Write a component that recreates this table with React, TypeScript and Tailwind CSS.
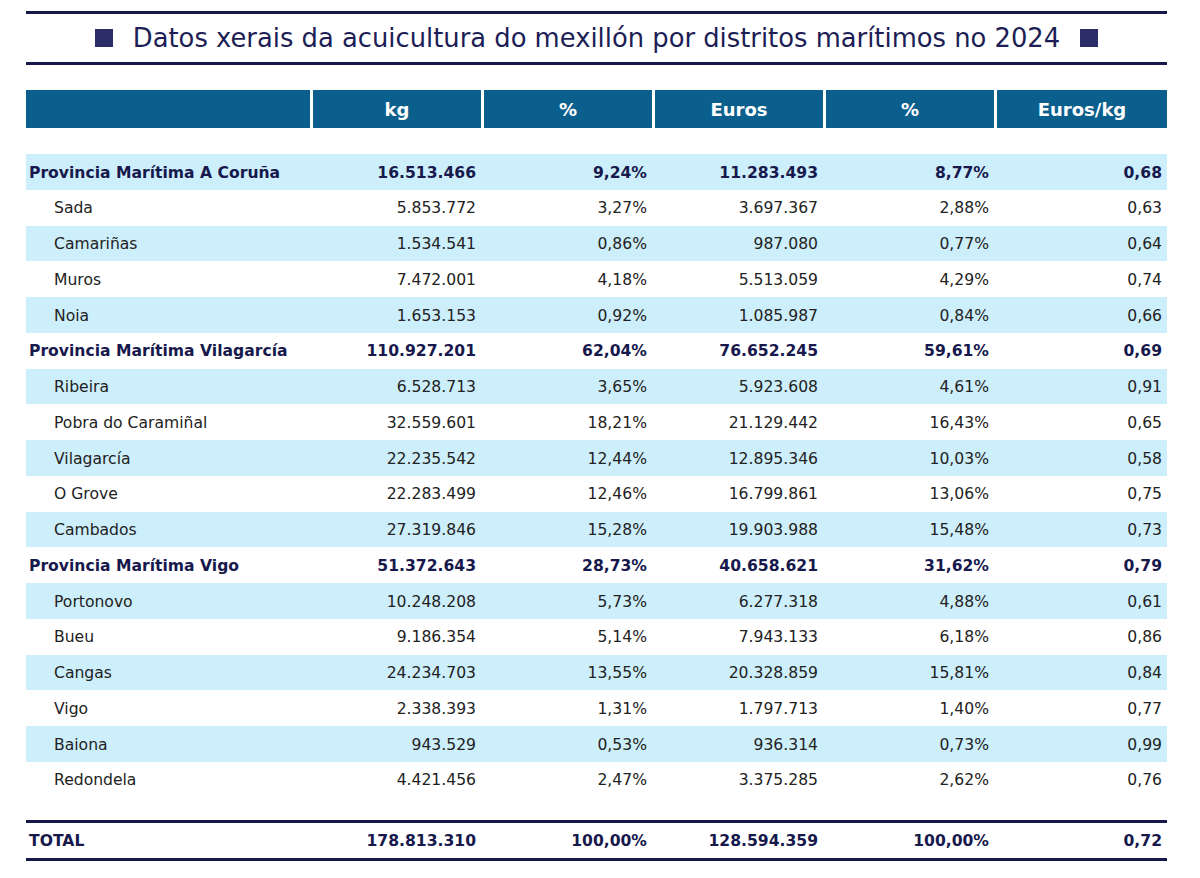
import React from "react";

type Row = {
  name: string;
  kg: string;
  kgPct: string;
  eur: string;
  eurPct: string;
  eurKg: string;
  head?: boolean;
};

const ROWS: Row[] = [
  { name: "Provincia Marítima A Coruña", kg: "16.513.466", kgPct: "9,24%", eur: "11.283.493", eurPct: "8,77%", eurKg: "0,68", head: true },
  { name: "Sada", kg: "5.853.772", kgPct: "3,27%", eur: "3.697.367", eurPct: "2,88%", eurKg: "0,63" },
  { name: "Camariñas", kg: "1.534.541", kgPct: "0,86%", eur: "987.080", eurPct: "0,77%", eurKg: "0,64" },
  { name: "Muros", kg: "7.472.001", kgPct: "4,18%", eur: "5.513.059", eurPct: "4,29%", eurKg: "0,74" },
  { name: "Noia", kg: "1.653.153", kgPct: "0,92%", eur: "1.085.987", eurPct: "0,84%", eurKg: "0,66" },
  { name: "Provincia Marítima Vilagarcía", kg: "110.927.201", kgPct: "62,04%", eur: "76.652.245", eurPct: "59,61%", eurKg: "0,69", head: true },
  { name: "Ribeira", kg: "6.528.713", kgPct: "3,65%", eur: "5.923.608", eurPct: "4,61%", eurKg: "0,91" },
  { name: "Pobra do Caramiñal", kg: "32.559.601", kgPct: "18,21%", eur: "21.129.442", eurPct: "16,43%", eurKg: "0,65" },
  { name: "Vilagarcía", kg: "22.235.542", kgPct: "12,44%", eur: "12.895.346", eurPct: "10,03%", eurKg: "0,58" },
  { name: "O Grove", kg: "22.283.499", kgPct: "12,46%", eur: "16.799.861", eurPct: "13,06%", eurKg: "0,75" },
  { name: "Cambados", kg: "27.319.846", kgPct: "15,28%", eur: "19.903.988", eurPct: "15,48%", eurKg: "0,73" },
  { name: "Provincia Marítima Vigo", kg: "51.372.643", kgPct: "28,73%", eur: "40.658.621", eurPct: "31,62%", eurKg: "0,79", head: true },
  { name: "Portonovo", kg: "10.248.208", kgPct: "5,73%", eur: "6.277.318", eurPct: "4,88%", eurKg: "0,61" },
  { name: "Bueu", kg: "9.186.354", kgPct: "5,14%", eur: "7.943.133", eurPct: "6,18%", eurKg: "0,86" },
  { name: "Cangas", kg: "24.234.703", kgPct: "13,55%", eur: "20.328.859", eurPct: "15,81%", eurKg: "0,84" },
  { name: "Vigo", kg: "2.338.393", kgPct: "1,31%", eur: "1.797.713", eurPct: "1,40%", eurKg: "0,77" },
  { name: "Baiona", kg: "943.529", kgPct: "0,53%", eur: "936.314", eurPct: "0,73%", eurKg: "0,99" },
  { name: "Redondela", kg: "4.421.456", kgPct: "2,47%", eur: "3.375.285", eurPct: "2,62%", eurKg: "0,76" },
];

const HEADERS = ["kg", "%", "Euros", "%", "Euros/kg"];

const cols = "grid grid-cols-[284px_168px_168px_168px_168px_170px] gap-x-[3px]";

export default function App() {
  return (
    <div
      className="w-[1200px] h-[878px] bg-white pt-[11px] pl-[26px]"
      style={{ fontFamily: '"DejaVu Sans", Verdana, sans-serif' }}
    >
      <div className="w-[1141px]">
        {/* título */}
        <div className="border-t-[3px] border-b-[3px] border-[#16184a] h-[54px] flex items-center justify-center gap-[20px]">
          <span className="w-[18px] h-[18px] bg-[#2b2d66]" />
          <h1 className="text-[25.8px] text-[#1c1e55] leading-none pt-[2px]">
            Datos xerais da acuicultura do mexillón por distritos marítimos no 2024
          </h1>
          <span className="w-[18px] h-[18px] bg-[#2b2d66]" />
        </div>

        {/* cabeceira */}
        <div className={`${cols} mt-[25px] h-[38px]`}>
          <div className="bg-[#0b5f8d]" />
          {HEADERS.map((h, i) => (
            <div key={i} className="bg-[#0b5f8d] text-white font-bold text-[18px] flex items-center justify-center pt-[1px]">
              {h}
            </div>
          ))}
        </div>

        {/* filas */}
        <div className="mt-[26px]">
          {ROWS.map((r, i) => (
            <div
              key={r.name}
              className={`${cols} h-[35.75px] items-center pt-[3px] text-[15.6px] ${i % 2 === 0 ? "bg-[#cdeefb]" : "bg-white"} ${r.head ? "font-bold text-[#17194d]" : "text-[#222]"}`}
            >
              <div className={r.head ? "pl-[3px]" : "pl-[28px]"}>{r.name}</div>
              <div className="text-right pr-[5px]">{r.kg}</div>
              <div className="text-right pr-[5px]">{r.kgPct}</div>
              <div className="text-right pr-[5px]">{r.eur}</div>
              <div className="text-right pr-[5px]">{r.eurPct}</div>
              <div className="text-right pr-[5px]">{r.eurKg}</div>
            </div>
          ))}
        </div>

        {/* total */}
        <div className={`${cols} mt-[22px] h-[41px] items-center pt-[3px] border-t-[3px] border-b-[3px] border-[#16184a] font-bold text-[15.6px] text-[#17194d]`}>
          <div className="pl-[3px]">TOTAL</div>
          <div className="text-right pr-[5px]">178.813.310</div>
          <div className="text-right pr-[5px]">100,00%</div>
          <div className="text-right pr-[5px]">128.594.359</div>
          <div className="text-right pr-[5px]">100,00%</div>
          <div className="text-right pr-[5px]">0,72</div>
        </div>
      </div>
    </div>
  );
}
